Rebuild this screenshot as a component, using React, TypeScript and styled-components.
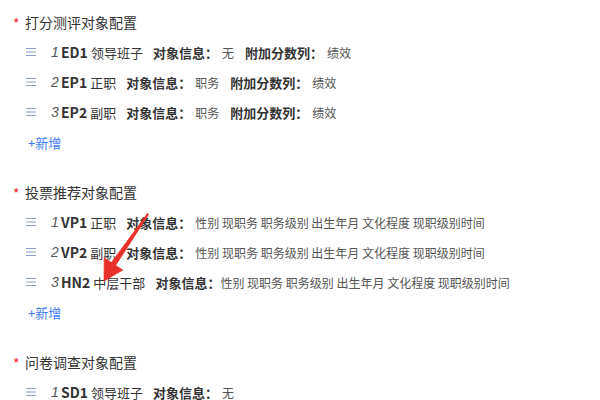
import React from "react";
import styled, { createGlobalStyle } from "styled-components";

const GlobalStyle = createGlobalStyle`
  html, body {
    margin: 0;
    padding: 0;
    background: #ffffff;
  }
  body {
    font-family: "Noto Sans CJK SC", "Liberation Sans", sans-serif;
    color: #333333;
  }
`;

const Page = styled.div`
  position: relative;
  width: 600px;
  height: 400px;
  overflow: hidden;
  padding: 7px 0 0 13px;
  box-sizing: border-box;
`;

const Section = styled.div`
  display: flex;
  flex-direction: column;
  margin-bottom: 20px;

  &:last-of-type {
    margin-bottom: 0;
  }
`;

const SectionTitle = styled.div`
  height: 30px;
  display: flex;
  align-items: center;
  font-size: 14px;
  color: #333333;
`;

const Required = styled.span`
  color: #f5222d;
  font-size: 14px;
  width: 12px;
  margin-top: 2px;
`;

const Row = styled.div`
  height: 30px;
  display: flex;
  align-items: center;
  padding-left: 13px;
  white-space: nowrap;
`;

const Handle = styled.span`
  display: inline-flex;
  width: 10px;
  margin-right: 15px;
`;

const Index = styled.span`
  font-family: "Liberation Sans", sans-serif;
  font-style: italic;
  font-size: 14px;
  color: #555555;
  width: 10px;
`;

const Code = styled.span`
  font-weight: 700;
  font-size: 14px;
  color: #333333;
  margin-right: 3px;
`;

const Name = styled.span`
  font-size: 13px;
  color: #333333;
  margin-right: 10px;
`;

const Label = styled.span`
  font-weight: 700;
  font-size: 13px;
  color: #333333;
`;

const Value = styled.span<{ $gap?: number }>`
  font-size: 12px;
  color: #555555;
  margin-left: ${(p) => p.$gap ?? 4}px;
  margin-right: 11px;
`;

const AddLink = styled.a`
  height: 30px;
  display: flex;
  align-items: center;
  padding-left: 15px;
  font-size: 13px;
  color: #3d7cf5;
  cursor: pointer;
`;

const Arrow = styled.svg`
  position: absolute;
  left: 96px;
  top: 206px;
`;

type Extra = { label: string; value: string };

type Item = {
  index: number;
  code: string;
  name: string;
  info: string;
  infoGap?: number;
  extra?: Extra;
};

type Group = { title: string; items: Item[]; canAdd?: boolean };

const info6 = "性别 现职务 职务级别 出生年月 文化程度 现职级别时间";

const groups: Group[] = [
  {
    title: "打分测评对象配置",
    canAdd: true,
    items: [
      { index: 1, code: "ED1", name: "领导班子", info: "无", extra: { label: "附加分数列：", value: "绩效" } },
      { index: 2, code: "EP1", name: "正职", info: "职务", extra: { label: "附加分数列：", value: "绩效" } },
      { index: 3, code: "EP2", name: "副职", info: "职务", extra: { label: "附加分数列：", value: "绩效" } },
    ],
  },
  {
    title: "投票推荐对象配置",
    canAdd: true,
    items: [
      { index: 1, code: "VP1", name: "正职", info: info6 },
      { index: 2, code: "VP2", name: "副职", info: info6 },
      { index: 3, code: "HN2", name: "中层干部", info: info6, infoGap: 0 },
    ],
  },
  {
    title: "问卷调查对象配置",
    items: [{ index: 1, code: "SD1", name: "领导班子", info: "无" }],
  },
];

const DragIcon = () => (
  <svg width="10" height="8" viewBox="0 0 10 8">
    <g stroke="#8a9cc0" strokeWidth="1">
      <line x1="0" y1="0.5" x2="10" y2="0.5" />
      <line x1="0" y1="4" x2="10" y2="4" />
      <line x1="0" y1="7.5" x2="10" y2="7.5" />
    </g>
  </svg>
);

const App = () => (
  <>
    <GlobalStyle />
    <Page>
      {groups.map((g) => (
        <Section key={g.title}>
          <SectionTitle>
            <Required>*</Required>
            {g.title}
          </SectionTitle>
          {g.items.map((it) => (
            <Row key={it.code}>
              <Handle>
                <DragIcon />
              </Handle>
              <Index>{it.index}</Index>
              <Code>{it.code}</Code>
              <Name>{it.name}</Name>
              <Label>对象信息：</Label>
              <Value $gap={it.infoGap}>{it.info}</Value>
              {it.extra && (
                <>
                  <Label>{it.extra.label}</Label>
                  <Value>{it.extra.value}</Value>
                </>
              )}
            </Row>
          ))}
          {g.canAdd && <AddLink>+新增</AddLink>}
        </Section>
      ))}
      <Arrow width="60" height="80" viewBox="0 0 60 80">
        <path
          d="M51.4 7.6 L15.4 56.6 L8.3 52 L8 75 L26.7 64 L19.6 59.4 L52.6 8.4 Z"
          fill="#e8302a"
          stroke="#e8302a"
          strokeWidth="0.8"
          strokeLinejoin="round"
        />
      </Arrow>
    </Page>
  </>
);

export default App;
